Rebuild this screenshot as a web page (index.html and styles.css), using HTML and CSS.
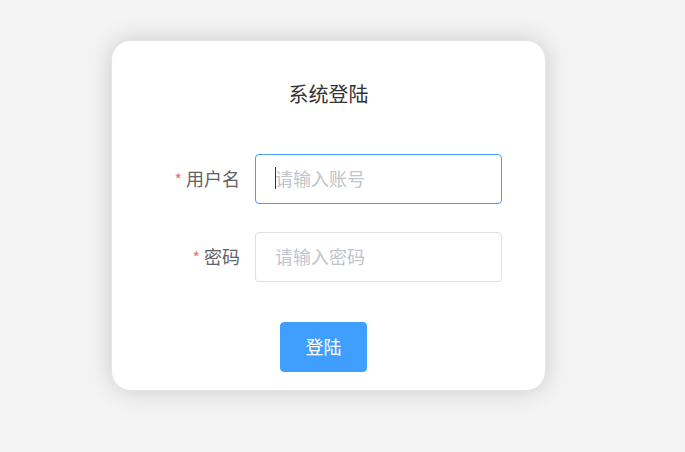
FILE: index.html
```html
<!DOCTYPE html>
<html lang="zh-CN">
<head>
<meta charset="utf-8">
<title>系统登陆</title>
<link rel="stylesheet" href="styles.css">
</head>
<body>
<div class="page">
  <div class="card">
    <h3 class="title">系统登陆</h3>
    <form class="form">
      <div class="item">
        <label class="label"><span class="star">*</span>用户名</label>
        <div class="field">
          <input class="input focus" type="text" placeholder="请输入账号">
          <span class="caret"></span>
        </div>
      </div>
      <div class="item">
        <label class="label"><span class="star">*</span>密码</label>
        <div class="field">
          <input class="input" type="password" placeholder="请输入密码">
        </div>
      </div>
      <div class="actions">
        <button class="btn" type="button">登陆</button>
      </div>
    </form>
  </div>
</div>
</body>
</html>
```
FILE: styles.css
```css
html, body {
  margin: 0;
  padding: 0;
  background: #f4f4f4;
  font-family: "Noto Sans CJK SC", "Liberation Sans", sans-serif;
}
.page {
  padding: 40px 0 0 111px;
  height: 452px;
  box-sizing: border-box;
}
.card {
  width: 435px;
  height: 351px;
  box-sizing: border-box;
  background: #fff;
  border: 1px solid #e6e6e6;
  border-radius: 20px;
  box-shadow: 0 0 24px rgba(0, 0, 0, 0.17);
  padding: 41px 43px 0 43px;
}
.title {
  margin: 0;
  font-size: 20px;
  line-height: 24px;
  font-weight: normal;
  color: #333;
  text-align: center;
  padding-bottom: 1px;
}
.form {
  margin-top: 47px;
}
.item {
  display: flex;
  align-items: center;
  height: 50px;
  margin-bottom: 28px;
}
.label {
  width: 100px;
  box-sizing: border-box;
  padding: 0 15px 2px 0;
  text-align: right;
  font-size: 18px;
  color: #606266;
  line-height: 48px;
}
.star {
  color: #f56c6c;
  margin-right: 4px;
  font-size: 16px;
}
.field {
  position: relative;
  width: 247px;
  height: 50px;
}
.input {
  width: 100%;
  height: 50px;
  box-sizing: border-box;
  border: 1px solid #dcdfe6;
  border-radius: 4px;
  padding: 0 19px 3px 19px;
  font-size: 18px;
  font-family: inherit;
  color: #606266;
  outline: none;
  background: #fff;
}
.input.focus {
  border-color: #409eff;
}
.input::placeholder {
  color: #c0c4cc;
}
.caret {
  position: absolute;
  left: 20px;
  top: 13px;
  width: 1px;
  height: 22px;
  background: #333;
}
.actions {
  display: flex;
  justify-content: center;
  padding-right: 10px;
  margin-top: 40px;
}
.btn {
  width: 87px;
  height: 50px;
  border: 1px solid #409eff;
  background: #409eff;
  color: #fff;
  border-radius: 4px;
  font-size: 18px;
  font-family: inherit;
  padding: 0 0 3px 0;
}
```
